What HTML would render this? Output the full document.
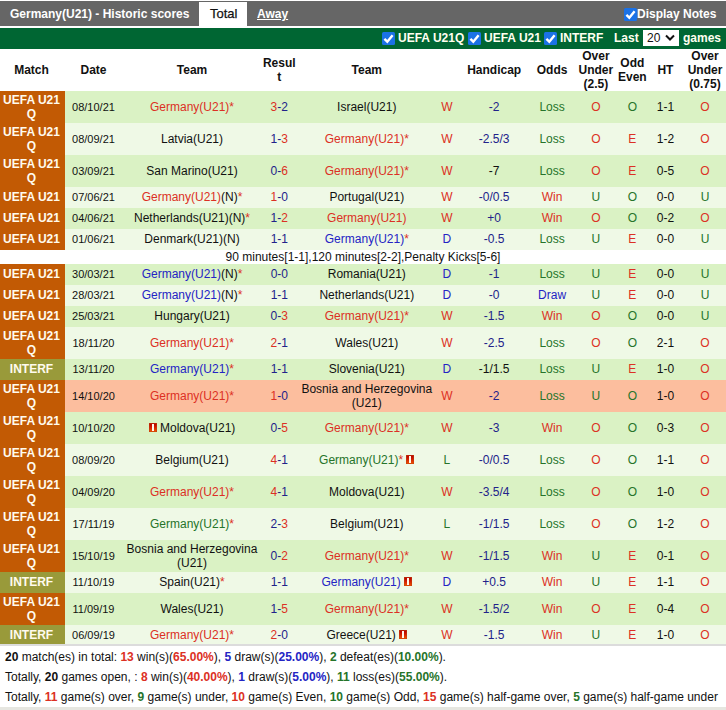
<!DOCTYPE html>
<html><head><meta charset="utf-8"><style>
*{margin:0;padding:0;box-sizing:border-box}
html,body{width:726px;height:710px;overflow:hidden;background:#fff}
body{position:relative;font-family:"Liberation Sans",sans-serif;font-size:12px;color:#111}
.abs{position:absolute}
.row{position:absolute;left:0;width:726px}
.mc{position:absolute;left:0;top:0;width:65px}
.c{position:absolute;top:0;width:200px;height:100%;display:flex;align-items:center;justify-content:center;text-align:center;white-space:nowrap;line-height:14px}
.c>div{padding-top:0px}
.m{color:#fffbee;font-weight:bold}
.d{font-size:11px}
.note{color:#111}
.rc{display:inline-block;position:relative;width:8px;height:9px;vertical-align:0;background:linear-gradient(180deg,#b00000 0,#d01a00 45%,#f25800 100%);box-shadow:inset 0 0 0 0.5px #c04010}
.rc b{position:absolute;left:3px;top:1px;width:2px;height:7px;background:#fff8ec}
.hd{position:absolute;top:49px;height:42px;width:200px;display:flex;align-items:center;justify-content:center;text-align:center;font-weight:bold;line-height:14px;color:#111}
.cb{position:absolute;width:13px;height:13px;background:#1b72e6;border-radius:1.5px}
.cb svg{position:absolute;left:0;top:0}
.sum{position:absolute;left:5px;white-space:nowrap;line-height:14px}
.sum b{font-weight:bold}
</style></head><body>

<div class="abs" style="left:0;top:1px;width:726px;height:25px;background:#666"></div>
<div class="abs" style="left:199px;top:2px;width:48px;height:26px;background:#fff"></div>
<div class="abs" style="left:10px;top:7px;line-height:14px;font-weight:bold;color:#fff;white-space:nowrap">Germany(U21) - Historic scores</div>
<div class="abs" style="left:210px;top:7px;line-height:14px;font-size:13px;-webkit-text-stroke:0.25px #111;color:#111">Total</div>
<div class="abs" style="left:257px;top:7px;line-height:14px;font-weight:bold;color:#fff;text-decoration:underline">Away</div>
<div class="cb" style="left:624px;top:8px"><svg width="13" height="13" viewBox="0 0 13 13"><path d="M2.4 6.9 L5.3 9.7 L10.6 3.3" stroke="#fff" stroke-width="2.4" fill="none"/></svg></div>
<div class="abs" style="left:637px;top:7px;line-height:14px;font-weight:bold;color:#fff;white-space:nowrap">Display Notes</div>
<div class="abs" style="left:0;top:28px;width:726px;height:21px;background:#006633"></div>
<div class="cb" style="left:382px;top:32px"><svg width="13" height="13" viewBox="0 0 13 13"><path d="M2.4 6.9 L5.3 9.7 L10.6 3.3" stroke="#fff" stroke-width="2.4" fill="none"/></svg></div>
<div class="abs" style="left:398px;top:31px;line-height:14px;font-weight:bold;color:#fffff0;white-space:nowrap">UEFA U21Q</div>
<div class="cb" style="left:468px;top:32px"><svg width="13" height="13" viewBox="0 0 13 13"><path d="M2.4 6.9 L5.3 9.7 L10.6 3.3" stroke="#fff" stroke-width="2.4" fill="none"/></svg></div>
<div class="abs" style="left:484px;top:31px;line-height:14px;font-weight:bold;color:#fffff0;white-space:nowrap">UEFA U21</div>
<div class="cb" style="left:544px;top:32px"><svg width="13" height="13" viewBox="0 0 13 13"><path d="M2.4 6.9 L5.3 9.7 L10.6 3.3" stroke="#fff" stroke-width="2.4" fill="none"/></svg></div>
<div class="abs" style="left:560px;top:31px;line-height:14px;font-weight:bold;color:#fffff0;white-space:nowrap">INTERF</div>
<div class="abs" style="left:614px;top:31px;line-height:14px;font-weight:bold;color:#fffff0;white-space:nowrap">Last</div>
<div class="abs" style="left:643px;top:30px;width:36px;height:16px;background:#fff"></div>
<div class="abs" style="left:647px;top:31px;line-height:14px;color:#111">20</div>
<svg class="abs" style="left:665px;top:34px" width="10" height="8" viewBox="0 0 10 8"><path d="M1 1.5 L5 5.5 L9 1.5" stroke="#111" stroke-width="2" fill="none"/></svg>
<div class="abs" style="left:683px;top:31px;line-height:14px;font-weight:bold;color:#fffff0;white-space:nowrap">games</div>

<div class="hd" style="left:-68.5px">Match</div><div class="hd" style="left:-6.5px">Date</div><div class="hd" style="left:92.0px">Team</div><div class="hd" style="left:179.3px">Resul<br>t</div><div class="hd" style="left:266.8px">Team</div><div class="hd" style="left:394.2px">Handicap</div><div class="hd" style="left:452.1px">Odds</div><div class="hd" style="left:495.9px">Over<br>Under<br>(2.5)</div><div class="hd" style="left:532.3px">Odd<br>Even</div><div class="hd" style="left:565.4px">HT</div><div class="hd" style="left:605.0px">Over<br>Under<br>(0.75)</div>
<div class="row" style="top:91px;height:32px;background:#daf2c4"><div class="mc" style="height:32px;background:#c25a04"></div><div class="c m" style="left:-68.5px"><div style="margin-bottom:0px">UEFA U21<br>Q</div></div><div class="c d" style="left:-6.5px"><div style="margin-bottom:0px">08/10/21</div></div><div class="c" style="left:92.0px"><div style="margin-bottom:0px"><span style="color:#dc3024">Germany(U21)</span><span style="color:#dc3024">*</span></div></div><div class="c" style="left:179.3px"><div style="margin-bottom:0px"><span style="color:#dc3024">3</span><span style="color:#22228a">-2</span></div></div><div class="c" style="left:266.8px"><div style="margin-bottom:0px"><span style="color:#111">Israel(U21)</span></div></div><div class="c" style="left:346.8px"><div style="margin-bottom:0px"><span style="color:#dc3024">W</span></div></div><div class="c" style="left:394.2px"><div style="margin-bottom:0px"><span style="color:#22228a">-2</span></div></div><div class="c" style="left:452.1px"><div style="margin-bottom:0px"><span style="color:#26742a">Loss</span></div></div><div class="c" style="left:495.9px"><div style="margin-bottom:0px"><span style="color:#dc3024">O</span></div></div><div class="c" style="left:532.3px"><div style="margin-bottom:0px"><span style="color:#26742a">O</span></div></div><div class="c" style="left:565.4px"><div style="margin-bottom:0px"><span style="color:#111">1-1</span></div></div><div class="c" style="left:605.0px"><div style="margin-bottom:0px"><span style="color:#dc3024">O</span></div></div></div>
<div class="row" style="top:123px;height:32px;background:#eff9e6"><div class="mc" style="height:32px;background:#c25a04"></div><div class="c m" style="left:-68.5px"><div style="margin-bottom:0px">UEFA U21<br>Q</div></div><div class="c d" style="left:-6.5px"><div style="margin-bottom:0px">08/09/21</div></div><div class="c" style="left:92.0px"><div style="margin-bottom:0px"><span style="color:#111">Latvia(U21)</span></div></div><div class="c" style="left:179.3px"><div style="margin-bottom:0px"><span style="color:#22228a">1-</span><span style="color:#dc3024">3</span></div></div><div class="c" style="left:266.8px"><div style="margin-bottom:0px"><span style="color:#dc3024">Germany(U21)</span><span style="color:#dc3024">*</span></div></div><div class="c" style="left:346.8px"><div style="margin-bottom:0px"><span style="color:#dc3024">W</span></div></div><div class="c" style="left:394.2px"><div style="margin-bottom:0px"><span style="color:#22228a">-2.5/3</span></div></div><div class="c" style="left:452.1px"><div style="margin-bottom:0px"><span style="color:#26742a">Loss</span></div></div><div class="c" style="left:495.9px"><div style="margin-bottom:0px"><span style="color:#dc3024">O</span></div></div><div class="c" style="left:532.3px"><div style="margin-bottom:0px"><span style="color:#dc3024">E</span></div></div><div class="c" style="left:565.4px"><div style="margin-bottom:0px"><span style="color:#111">1-2</span></div></div><div class="c" style="left:605.0px"><div style="margin-bottom:0px"><span style="color:#dc3024">O</span></div></div></div>
<div class="row" style="top:155px;height:32px;background:#daf2c4"><div class="mc" style="height:32px;background:#c25a04"></div><div class="c m" style="left:-68.5px"><div style="margin-bottom:0px">UEFA U21<br>Q</div></div><div class="c d" style="left:-6.5px"><div style="margin-bottom:0px">03/09/21</div></div><div class="c" style="left:92.0px"><div style="margin-bottom:0px"><span style="color:#111">San Marino(U21)</span></div></div><div class="c" style="left:179.3px"><div style="margin-bottom:0px"><span style="color:#22228a">0-</span><span style="color:#dc3024">6</span></div></div><div class="c" style="left:266.8px"><div style="margin-bottom:0px"><span style="color:#dc3024">Germany(U21)</span><span style="color:#dc3024">*</span></div></div><div class="c" style="left:346.8px"><div style="margin-bottom:0px"><span style="color:#dc3024">W</span></div></div><div class="c" style="left:394.2px"><div style="margin-bottom:0px"><span style="color:#111">-7</span></div></div><div class="c" style="left:452.1px"><div style="margin-bottom:0px"><span style="color:#26742a">Loss</span></div></div><div class="c" style="left:495.9px"><div style="margin-bottom:0px"><span style="color:#dc3024">O</span></div></div><div class="c" style="left:532.3px"><div style="margin-bottom:0px"><span style="color:#dc3024">E</span></div></div><div class="c" style="left:565.4px"><div style="margin-bottom:0px"><span style="color:#111">0-5</span></div></div><div class="c" style="left:605.0px"><div style="margin-bottom:0px"><span style="color:#dc3024">O</span></div></div></div>
<div class="row" style="top:187px;height:21px;background:#eff9e6"><div class="mc" style="height:21px;background:#c25a04"></div><div class="c m" style="left:-68.5px"><div style="margin-bottom:2px">UEFA U21</div></div><div class="c d" style="left:-6.5px"><div style="margin-bottom:2px">07/06/21</div></div><div class="c" style="left:92.0px"><div style="margin-bottom:2px"><span style="color:#dc3024">Germany(U21)</span><span style="color:#111">(N)</span><span style="color:#dc3024">*</span></div></div><div class="c" style="left:179.3px"><div style="margin-bottom:2px"><span style="color:#dc3024">1</span><span style="color:#22228a">-0</span></div></div><div class="c" style="left:266.8px"><div style="margin-bottom:2px"><span style="color:#111">Portugal(U21)</span></div></div><div class="c" style="left:346.8px"><div style="margin-bottom:2px"><span style="color:#dc3024">W</span></div></div><div class="c" style="left:394.2px"><div style="margin-bottom:2px"><span style="color:#22228a">-0/0.5</span></div></div><div class="c" style="left:452.1px"><div style="margin-bottom:2px"><span style="color:#dc3024">Win</span></div></div><div class="c" style="left:495.9px"><div style="margin-bottom:2px"><span style="color:#26742a">U</span></div></div><div class="c" style="left:532.3px"><div style="margin-bottom:2px"><span style="color:#26742a">O</span></div></div><div class="c" style="left:565.4px"><div style="margin-bottom:2px"><span style="color:#111">0-0</span></div></div><div class="c" style="left:605.0px"><div style="margin-bottom:2px"><span style="color:#26742a">U</span></div></div></div>
<div class="row" style="top:208px;height:21px;background:#daf2c4"><div class="mc" style="height:21px;background:#c25a04"></div><div class="c m" style="left:-68.5px"><div style="margin-bottom:2px">UEFA U21</div></div><div class="c d" style="left:-6.5px"><div style="margin-bottom:2px">04/06/21</div></div><div class="c" style="left:92.0px"><div style="margin-bottom:2px"><span style="color:#111">Netherlands(U21)(N)</span><span style="color:#dc3024">*</span></div></div><div class="c" style="left:179.3px"><div style="margin-bottom:2px"><span style="color:#22228a">1-</span><span style="color:#dc3024">2</span></div></div><div class="c" style="left:266.8px"><div style="margin-bottom:2px"><span style="color:#dc3024">Germany(U21)</span></div></div><div class="c" style="left:346.8px"><div style="margin-bottom:2px"><span style="color:#dc3024">W</span></div></div><div class="c" style="left:394.2px"><div style="margin-bottom:2px"><span style="color:#22228a">+0</span></div></div><div class="c" style="left:452.1px"><div style="margin-bottom:2px"><span style="color:#dc3024">Win</span></div></div><div class="c" style="left:495.9px"><div style="margin-bottom:2px"><span style="color:#dc3024">O</span></div></div><div class="c" style="left:532.3px"><div style="margin-bottom:2px"><span style="color:#26742a">O</span></div></div><div class="c" style="left:565.4px"><div style="margin-bottom:2px"><span style="color:#111">0-2</span></div></div><div class="c" style="left:605.0px"><div style="margin-bottom:2px"><span style="color:#dc3024">O</span></div></div></div>
<div class="row" style="top:229px;height:21px;background:#eff9e6"><div class="mc" style="height:21px;background:#c25a04"></div><div class="c m" style="left:-68.5px"><div style="margin-bottom:2px">UEFA U21</div></div><div class="c d" style="left:-6.5px"><div style="margin-bottom:2px">01/06/21</div></div><div class="c" style="left:92.0px"><div style="margin-bottom:2px"><span style="color:#111">Denmark(U21)(N)</span></div></div><div class="c" style="left:179.3px"><div style="margin-bottom:2px"><span style="color:#22228a">1-1</span></div></div><div class="c" style="left:266.8px"><div style="margin-bottom:2px"><span style="color:#2424c4">Germany(U21)</span><span style="color:#dc3024">*</span></div></div><div class="c" style="left:346.8px"><div style="margin-bottom:2px"><span style="color:#2424c4">D</span></div></div><div class="c" style="left:394.2px"><div style="margin-bottom:2px"><span style="color:#22228a">-0.5</span></div></div><div class="c" style="left:452.1px"><div style="margin-bottom:2px"><span style="color:#26742a">Loss</span></div></div><div class="c" style="left:495.9px"><div style="margin-bottom:2px"><span style="color:#26742a">U</span></div></div><div class="c" style="left:532.3px"><div style="margin-bottom:2px"><span style="color:#dc3024">E</span></div></div><div class="c" style="left:565.4px"><div style="margin-bottom:2px"><span style="color:#111">0-0</span></div></div><div class="c" style="left:605.0px"><div style="margin-bottom:2px"><span style="color:#26742a">U</span></div></div></div>
<div class="row" style="top:250px;height:14px;background:#fff"><div class="c note" style="left:0;width:726px;line-height:14px">90 minutes[1-1],120 minutes[2-2],Penalty Kicks[5-6]</div></div>
<div class="row" style="top:264px;height:21px;background:#daf2c4"><div class="mc" style="height:21px;background:#c25a04"></div><div class="c m" style="left:-68.5px"><div style="margin-bottom:2px">UEFA U21</div></div><div class="c d" style="left:-6.5px"><div style="margin-bottom:2px">30/03/21</div></div><div class="c" style="left:92.0px"><div style="margin-bottom:2px"><span style="color:#2424c4">Germany(U21)</span><span style="color:#111">(N)</span><span style="color:#dc3024">*</span></div></div><div class="c" style="left:179.3px"><div style="margin-bottom:2px"><span style="color:#22228a">0-0</span></div></div><div class="c" style="left:266.8px"><div style="margin-bottom:2px"><span style="color:#111">Romania(U21)</span></div></div><div class="c" style="left:346.8px"><div style="margin-bottom:2px"><span style="color:#2424c4">D</span></div></div><div class="c" style="left:394.2px"><div style="margin-bottom:2px"><span style="color:#22228a">-1</span></div></div><div class="c" style="left:452.1px"><div style="margin-bottom:2px"><span style="color:#26742a">Loss</span></div></div><div class="c" style="left:495.9px"><div style="margin-bottom:2px"><span style="color:#26742a">U</span></div></div><div class="c" style="left:532.3px"><div style="margin-bottom:2px"><span style="color:#dc3024">E</span></div></div><div class="c" style="left:565.4px"><div style="margin-bottom:2px"><span style="color:#111">0-0</span></div></div><div class="c" style="left:605.0px"><div style="margin-bottom:2px"><span style="color:#26742a">U</span></div></div></div>
<div class="row" style="top:285px;height:21px;background:#eff9e6"><div class="mc" style="height:21px;background:#c25a04"></div><div class="c m" style="left:-68.5px"><div style="margin-bottom:2px">UEFA U21</div></div><div class="c d" style="left:-6.5px"><div style="margin-bottom:2px">28/03/21</div></div><div class="c" style="left:92.0px"><div style="margin-bottom:2px"><span style="color:#2424c4">Germany(U21)</span><span style="color:#111">(N)</span><span style="color:#dc3024">*</span></div></div><div class="c" style="left:179.3px"><div style="margin-bottom:2px"><span style="color:#22228a">1-1</span></div></div><div class="c" style="left:266.8px"><div style="margin-bottom:2px"><span style="color:#111">Netherlands(U21)</span></div></div><div class="c" style="left:346.8px"><div style="margin-bottom:2px"><span style="color:#2424c4">D</span></div></div><div class="c" style="left:394.2px"><div style="margin-bottom:2px"><span style="color:#22228a">-0</span></div></div><div class="c" style="left:452.1px"><div style="margin-bottom:2px"><span style="color:#2424c4">Draw</span></div></div><div class="c" style="left:495.9px"><div style="margin-bottom:2px"><span style="color:#26742a">U</span></div></div><div class="c" style="left:532.3px"><div style="margin-bottom:2px"><span style="color:#dc3024">E</span></div></div><div class="c" style="left:565.4px"><div style="margin-bottom:2px"><span style="color:#111">0-0</span></div></div><div class="c" style="left:605.0px"><div style="margin-bottom:2px"><span style="color:#26742a">U</span></div></div></div>
<div class="row" style="top:306px;height:21px;background:#daf2c4"><div class="mc" style="height:21px;background:#c25a04"></div><div class="c m" style="left:-68.5px"><div style="margin-bottom:2px">UEFA U21</div></div><div class="c d" style="left:-6.5px"><div style="margin-bottom:2px">25/03/21</div></div><div class="c" style="left:92.0px"><div style="margin-bottom:2px"><span style="color:#111">Hungary(U21)</span></div></div><div class="c" style="left:179.3px"><div style="margin-bottom:2px"><span style="color:#22228a">0-</span><span style="color:#dc3024">3</span></div></div><div class="c" style="left:266.8px"><div style="margin-bottom:2px"><span style="color:#dc3024">Germany(U21)</span><span style="color:#dc3024">*</span></div></div><div class="c" style="left:346.8px"><div style="margin-bottom:2px"><span style="color:#dc3024">W</span></div></div><div class="c" style="left:394.2px"><div style="margin-bottom:2px"><span style="color:#22228a">-1.5</span></div></div><div class="c" style="left:452.1px"><div style="margin-bottom:2px"><span style="color:#dc3024">Win</span></div></div><div class="c" style="left:495.9px"><div style="margin-bottom:2px"><span style="color:#dc3024">O</span></div></div><div class="c" style="left:532.3px"><div style="margin-bottom:2px"><span style="color:#26742a">O</span></div></div><div class="c" style="left:565.4px"><div style="margin-bottom:2px"><span style="color:#111">0-0</span></div></div><div class="c" style="left:605.0px"><div style="margin-bottom:2px"><span style="color:#26742a">U</span></div></div></div>
<div class="row" style="top:327px;height:32px;background:#eff9e6"><div class="mc" style="height:32px;background:#c25a04"></div><div class="c m" style="left:-68.5px"><div style="margin-bottom:0px">UEFA U21<br>Q</div></div><div class="c d" style="left:-6.5px"><div style="margin-bottom:0px">18/11/20</div></div><div class="c" style="left:92.0px"><div style="margin-bottom:0px"><span style="color:#dc3024">Germany(U21)</span><span style="color:#dc3024">*</span></div></div><div class="c" style="left:179.3px"><div style="margin-bottom:0px"><span style="color:#dc3024">2</span><span style="color:#22228a">-1</span></div></div><div class="c" style="left:266.8px"><div style="margin-bottom:0px"><span style="color:#111">Wales(U21)</span></div></div><div class="c" style="left:346.8px"><div style="margin-bottom:0px"><span style="color:#dc3024">W</span></div></div><div class="c" style="left:394.2px"><div style="margin-bottom:0px"><span style="color:#22228a">-2.5</span></div></div><div class="c" style="left:452.1px"><div style="margin-bottom:0px"><span style="color:#26742a">Loss</span></div></div><div class="c" style="left:495.9px"><div style="margin-bottom:0px"><span style="color:#dc3024">O</span></div></div><div class="c" style="left:532.3px"><div style="margin-bottom:0px"><span style="color:#26742a">O</span></div></div><div class="c" style="left:565.4px"><div style="margin-bottom:0px"><span style="color:#111">2-1</span></div></div><div class="c" style="left:605.0px"><div style="margin-bottom:0px"><span style="color:#dc3024">O</span></div></div></div>
<div class="row" style="top:359px;height:21px;background:#daf2c4"><div class="mc" style="height:21px;background:#999a3a"></div><div class="c m" style="left:-68.5px"><div style="margin-bottom:2px">INTERF</div></div><div class="c d" style="left:-6.5px"><div style="margin-bottom:2px">13/11/20</div></div><div class="c" style="left:92.0px"><div style="margin-bottom:2px"><span style="color:#2424c4">Germany(U21)</span><span style="color:#dc3024">*</span></div></div><div class="c" style="left:179.3px"><div style="margin-bottom:2px"><span style="color:#22228a">1-1</span></div></div><div class="c" style="left:266.8px"><div style="margin-bottom:2px"><span style="color:#111">Slovenia(U21)</span></div></div><div class="c" style="left:346.8px"><div style="margin-bottom:2px"><span style="color:#2424c4">D</span></div></div><div class="c" style="left:394.2px"><div style="margin-bottom:2px"><span style="color:#111">-1/1.5</span></div></div><div class="c" style="left:452.1px"><div style="margin-bottom:2px"><span style="color:#26742a">Loss</span></div></div><div class="c" style="left:495.9px"><div style="margin-bottom:2px"><span style="color:#26742a">U</span></div></div><div class="c" style="left:532.3px"><div style="margin-bottom:2px"><span style="color:#dc3024">E</span></div></div><div class="c" style="left:565.4px"><div style="margin-bottom:2px"><span style="color:#111">1-0</span></div></div><div class="c" style="left:605.0px"><div style="margin-bottom:2px"><span style="color:#dc3024">O</span></div></div></div>
<div class="row" style="top:380px;height:32px;background:#fcbe9e"><div class="mc" style="height:32px;background:#c25a04"></div><div class="c m" style="left:-68.5px"><div style="margin-bottom:0px">UEFA U21<br>Q</div></div><div class="c d" style="left:-6.5px"><div style="margin-bottom:0px">14/10/20</div></div><div class="c" style="left:92.0px"><div style="margin-bottom:0px"><span style="color:#dc3024">Germany(U21)</span><span style="color:#dc3024">*</span></div></div><div class="c" style="left:179.3px"><div style="margin-bottom:0px"><span style="color:#dc3024">1</span><span style="color:#22228a">-0</span></div></div><div class="c" style="left:266.8px"><div style="margin-bottom:0px"><span style="color:#111">Bosnia and Herzegovina<br>(U21)</span></div></div><div class="c" style="left:346.8px"><div style="margin-bottom:0px"><span style="color:#dc3024">W</span></div></div><div class="c" style="left:394.2px"><div style="margin-bottom:0px"><span style="color:#22228a">-2</span></div></div><div class="c" style="left:452.1px"><div style="margin-bottom:0px"><span style="color:#26742a">Loss</span></div></div><div class="c" style="left:495.9px"><div style="margin-bottom:0px"><span style="color:#26742a">U</span></div></div><div class="c" style="left:532.3px"><div style="margin-bottom:0px"><span style="color:#26742a">O</span></div></div><div class="c" style="left:565.4px"><div style="margin-bottom:0px"><span style="color:#111">1-0</span></div></div><div class="c" style="left:605.0px"><div style="margin-bottom:0px"><span style="color:#dc3024">O</span></div></div></div>
<div class="row" style="top:412px;height:32px;background:#daf2c4"><div class="mc" style="height:32px;background:#c25a04"></div><div class="c m" style="left:-68.5px"><div style="margin-bottom:0px">UEFA U21<br>Q</div></div><div class="c d" style="left:-6.5px"><div style="margin-bottom:0px">10/10/20</div></div><div class="c" style="left:92.0px"><div style="margin-bottom:0px"><i class="rc"><b></b></i> <span style="color:#111">Moldova(U21)</span></div></div><div class="c" style="left:179.3px"><div style="margin-bottom:0px"><span style="color:#22228a">0-</span><span style="color:#dc3024">5</span></div></div><div class="c" style="left:266.8px"><div style="margin-bottom:0px"><span style="color:#dc3024">Germany(U21)</span><span style="color:#dc3024">*</span></div></div><div class="c" style="left:346.8px"><div style="margin-bottom:0px"><span style="color:#dc3024">W</span></div></div><div class="c" style="left:394.2px"><div style="margin-bottom:0px"><span style="color:#22228a">-3</span></div></div><div class="c" style="left:452.1px"><div style="margin-bottom:0px"><span style="color:#dc3024">Win</span></div></div><div class="c" style="left:495.9px"><div style="margin-bottom:0px"><span style="color:#dc3024">O</span></div></div><div class="c" style="left:532.3px"><div style="margin-bottom:0px"><span style="color:#26742a">O</span></div></div><div class="c" style="left:565.4px"><div style="margin-bottom:0px"><span style="color:#111">0-3</span></div></div><div class="c" style="left:605.0px"><div style="margin-bottom:0px"><span style="color:#dc3024">O</span></div></div></div>
<div class="row" style="top:444px;height:32px;background:#eff9e6"><div class="mc" style="height:32px;background:#c25a04"></div><div class="c m" style="left:-68.5px"><div style="margin-bottom:0px">UEFA U21<br>Q</div></div><div class="c d" style="left:-6.5px"><div style="margin-bottom:0px">08/09/20</div></div><div class="c" style="left:92.0px"><div style="margin-bottom:0px"><span style="color:#111">Belgium(U21)</span></div></div><div class="c" style="left:179.3px"><div style="margin-bottom:0px"><span style="color:#dc3024">4</span><span style="color:#22228a">-1</span></div></div><div class="c" style="left:266.8px"><div style="margin-bottom:0px"><span style="color:#26742a">Germany(U21)</span><span style="color:#dc3024">*</span> <i class="rc"><b></b></i></div></div><div class="c" style="left:346.8px"><div style="margin-bottom:0px"><span style="color:#26742a">L</span></div></div><div class="c" style="left:394.2px"><div style="margin-bottom:0px"><span style="color:#22228a">-0/0.5</span></div></div><div class="c" style="left:452.1px"><div style="margin-bottom:0px"><span style="color:#26742a">Loss</span></div></div><div class="c" style="left:495.9px"><div style="margin-bottom:0px"><span style="color:#dc3024">O</span></div></div><div class="c" style="left:532.3px"><div style="margin-bottom:0px"><span style="color:#26742a">O</span></div></div><div class="c" style="left:565.4px"><div style="margin-bottom:0px"><span style="color:#111">1-1</span></div></div><div class="c" style="left:605.0px"><div style="margin-bottom:0px"><span style="color:#dc3024">O</span></div></div></div>
<div class="row" style="top:476px;height:32px;background:#daf2c4"><div class="mc" style="height:32px;background:#c25a04"></div><div class="c m" style="left:-68.5px"><div style="margin-bottom:0px">UEFA U21<br>Q</div></div><div class="c d" style="left:-6.5px"><div style="margin-bottom:0px">04/09/20</div></div><div class="c" style="left:92.0px"><div style="margin-bottom:0px"><span style="color:#dc3024">Germany(U21)</span><span style="color:#dc3024">*</span></div></div><div class="c" style="left:179.3px"><div style="margin-bottom:0px"><span style="color:#dc3024">4</span><span style="color:#22228a">-1</span></div></div><div class="c" style="left:266.8px"><div style="margin-bottom:0px"><span style="color:#111">Moldova(U21)</span></div></div><div class="c" style="left:346.8px"><div style="margin-bottom:0px"><span style="color:#dc3024">W</span></div></div><div class="c" style="left:394.2px"><div style="margin-bottom:0px"><span style="color:#22228a">-3.5/4</span></div></div><div class="c" style="left:452.1px"><div style="margin-bottom:0px"><span style="color:#26742a">Loss</span></div></div><div class="c" style="left:495.9px"><div style="margin-bottom:0px"><span style="color:#dc3024">O</span></div></div><div class="c" style="left:532.3px"><div style="margin-bottom:0px"><span style="color:#26742a">O</span></div></div><div class="c" style="left:565.4px"><div style="margin-bottom:0px"><span style="color:#111">1-0</span></div></div><div class="c" style="left:605.0px"><div style="margin-bottom:0px"><span style="color:#dc3024">O</span></div></div></div>
<div class="row" style="top:508px;height:32px;background:#eff9e6"><div class="mc" style="height:32px;background:#c25a04"></div><div class="c m" style="left:-68.5px"><div style="margin-bottom:0px">UEFA U21<br>Q</div></div><div class="c d" style="left:-6.5px"><div style="margin-bottom:0px">17/11/19</div></div><div class="c" style="left:92.0px"><div style="margin-bottom:0px"><span style="color:#26742a">Germany(U21)</span><span style="color:#dc3024">*</span></div></div><div class="c" style="left:179.3px"><div style="margin-bottom:0px"><span style="color:#22228a">2-</span><span style="color:#dc3024">3</span></div></div><div class="c" style="left:266.8px"><div style="margin-bottom:0px"><span style="color:#111">Belgium(U21)</span></div></div><div class="c" style="left:346.8px"><div style="margin-bottom:0px"><span style="color:#26742a">L</span></div></div><div class="c" style="left:394.2px"><div style="margin-bottom:0px"><span style="color:#22228a">-1/1.5</span></div></div><div class="c" style="left:452.1px"><div style="margin-bottom:0px"><span style="color:#26742a">Loss</span></div></div><div class="c" style="left:495.9px"><div style="margin-bottom:0px"><span style="color:#dc3024">O</span></div></div><div class="c" style="left:532.3px"><div style="margin-bottom:0px"><span style="color:#26742a">O</span></div></div><div class="c" style="left:565.4px"><div style="margin-bottom:0px"><span style="color:#111">1-2</span></div></div><div class="c" style="left:605.0px"><div style="margin-bottom:0px"><span style="color:#dc3024">O</span></div></div></div>
<div class="row" style="top:540px;height:32px;background:#daf2c4"><div class="mc" style="height:32px;background:#c25a04"></div><div class="c m" style="left:-68.5px"><div style="margin-bottom:0px">UEFA U21<br>Q</div></div><div class="c d" style="left:-6.5px"><div style="margin-bottom:0px">15/10/19</div></div><div class="c" style="left:92.0px"><div style="margin-bottom:0px"><span style="color:#111">Bosnia and Herzegovina<br>(U21)</span></div></div><div class="c" style="left:179.3px"><div style="margin-bottom:0px"><span style="color:#22228a">0-</span><span style="color:#dc3024">2</span></div></div><div class="c" style="left:266.8px"><div style="margin-bottom:0px"><span style="color:#dc3024">Germany(U21)</span><span style="color:#dc3024">*</span></div></div><div class="c" style="left:346.8px"><div style="margin-bottom:0px"><span style="color:#dc3024">W</span></div></div><div class="c" style="left:394.2px"><div style="margin-bottom:0px"><span style="color:#22228a">-1/1.5</span></div></div><div class="c" style="left:452.1px"><div style="margin-bottom:0px"><span style="color:#dc3024">Win</span></div></div><div class="c" style="left:495.9px"><div style="margin-bottom:0px"><span style="color:#26742a">U</span></div></div><div class="c" style="left:532.3px"><div style="margin-bottom:0px"><span style="color:#dc3024">E</span></div></div><div class="c" style="left:565.4px"><div style="margin-bottom:0px"><span style="color:#111">0-1</span></div></div><div class="c" style="left:605.0px"><div style="margin-bottom:0px"><span style="color:#dc3024">O</span></div></div></div>
<div class="row" style="top:572px;height:21px;background:#eff9e6"><div class="mc" style="height:21px;background:#999a3a"></div><div class="c m" style="left:-68.5px"><div style="margin-bottom:2px">INTERF</div></div><div class="c d" style="left:-6.5px"><div style="margin-bottom:2px">11/10/19</div></div><div class="c" style="left:92.0px"><div style="margin-bottom:2px"><span style="color:#111">Spain(U21)</span><span style="color:#dc3024">*</span></div></div><div class="c" style="left:179.3px"><div style="margin-bottom:2px"><span style="color:#22228a">1-1</span></div></div><div class="c" style="left:266.8px"><div style="margin-bottom:2px"><span style="color:#2424c4">Germany(U21)</span> <i class="rc"><b></b></i></div></div><div class="c" style="left:346.8px"><div style="margin-bottom:2px"><span style="color:#2424c4">D</span></div></div><div class="c" style="left:394.2px"><div style="margin-bottom:2px"><span style="color:#22228a">+0.5</span></div></div><div class="c" style="left:452.1px"><div style="margin-bottom:2px"><span style="color:#dc3024">Win</span></div></div><div class="c" style="left:495.9px"><div style="margin-bottom:2px"><span style="color:#26742a">U</span></div></div><div class="c" style="left:532.3px"><div style="margin-bottom:2px"><span style="color:#dc3024">E</span></div></div><div class="c" style="left:565.4px"><div style="margin-bottom:2px"><span style="color:#111">1-1</span></div></div><div class="c" style="left:605.0px"><div style="margin-bottom:2px"><span style="color:#dc3024">O</span></div></div></div>
<div class="row" style="top:593px;height:32px;background:#daf2c4"><div class="mc" style="height:32px;background:#c25a04"></div><div class="c m" style="left:-68.5px"><div style="margin-bottom:0px">UEFA U21<br>Q</div></div><div class="c d" style="left:-6.5px"><div style="margin-bottom:0px">11/09/19</div></div><div class="c" style="left:92.0px"><div style="margin-bottom:0px"><span style="color:#111">Wales(U21)</span></div></div><div class="c" style="left:179.3px"><div style="margin-bottom:0px"><span style="color:#22228a">1-</span><span style="color:#dc3024">5</span></div></div><div class="c" style="left:266.8px"><div style="margin-bottom:0px"><span style="color:#dc3024">Germany(U21)</span><span style="color:#dc3024">*</span></div></div><div class="c" style="left:346.8px"><div style="margin-bottom:0px"><span style="color:#dc3024">W</span></div></div><div class="c" style="left:394.2px"><div style="margin-bottom:0px"><span style="color:#22228a">-1.5/2</span></div></div><div class="c" style="left:452.1px"><div style="margin-bottom:0px"><span style="color:#dc3024">Win</span></div></div><div class="c" style="left:495.9px"><div style="margin-bottom:0px"><span style="color:#dc3024">O</span></div></div><div class="c" style="left:532.3px"><div style="margin-bottom:0px"><span style="color:#dc3024">E</span></div></div><div class="c" style="left:565.4px"><div style="margin-bottom:0px"><span style="color:#111">0-4</span></div></div><div class="c" style="left:605.0px"><div style="margin-bottom:0px"><span style="color:#dc3024">O</span></div></div></div>
<div class="row" style="top:625px;height:21px;background:#eff9e6"><div class="mc" style="height:21px;background:#999a3a"></div><div class="c m" style="left:-68.5px"><div style="margin-bottom:2px">INTERF</div></div><div class="c d" style="left:-6.5px"><div style="margin-bottom:2px">06/09/19</div></div><div class="c" style="left:92.0px"><div style="margin-bottom:2px"><span style="color:#dc3024">Germany(U21)</span><span style="color:#dc3024">*</span></div></div><div class="c" style="left:179.3px"><div style="margin-bottom:2px"><span style="color:#dc3024">2</span><span style="color:#22228a">-0</span></div></div><div class="c" style="left:266.8px"><div style="margin-bottom:2px"><span style="color:#111">Greece(U21)</span> <i class="rc"><b></b></i></div></div><div class="c" style="left:346.8px"><div style="margin-bottom:2px"><span style="color:#dc3024">W</span></div></div><div class="c" style="left:394.2px"><div style="margin-bottom:2px"><span style="color:#22228a">-1.5</span></div></div><div class="c" style="left:452.1px"><div style="margin-bottom:2px"><span style="color:#dc3024">Win</span></div></div><div class="c" style="left:495.9px"><div style="margin-bottom:2px"><span style="color:#26742a">U</span></div></div><div class="c" style="left:532.3px"><div style="margin-bottom:2px"><span style="color:#dc3024">E</span></div></div><div class="c" style="left:565.4px"><div style="margin-bottom:2px"><span style="color:#111">1-0</span></div></div><div class="c" style="left:605.0px"><div style="margin-bottom:2px"><span style="color:#dc3024">O</span></div></div></div>

<div class="abs" style="left:0;top:644px;width:726px;height:2px;background:#dcdcdc"></div>
<div class="sum" style="top:650px"><span style="color:#111"><b>20</b></span> match(es) in total: <b style="color:#dc3024">13</b> win(s)(<b style="color:#dc3024">65.00%</b>), <b style="color:#2424c4">5</b> draw(s)(<b style="color:#2424c4">25.00%</b>), <b style="color:#26742a">2</b> defeat(es)(<b style="color:#26742a">10.00%</b>).</div>
<div class="sum" style="top:670px">Totally, <b>20</b> games open, : <b style="color:#dc3024">8</b> win(s)(<b style="color:#dc3024">40.00%</b>), <b style="color:#2424c4">1</b> draw(s)(<b style="color:#2424c4">5.00%</b>), <b style="color:#26742a">11</b> loss(es)(<b style="color:#26742a">55.00%</b>).</div>
<div class="sum" style="top:690px">Totally, <b style="color:#dc3024">11</b> game(s) over, <b style="color:#26742a">9</b> game(s) under, <b style="color:#dc3024">10</b> game(s) Even, <b style="color:#26742a">10</b> game(s) Odd, <b style="color:#dc3024">15</b> game(s) half-game over, <b style="color:#26742a">5</b> game(s) half-game under</div>
<div class="abs" style="left:0;top:707px;width:726px;height:3px;background:#e6e6e0"></div>

</body></html>
